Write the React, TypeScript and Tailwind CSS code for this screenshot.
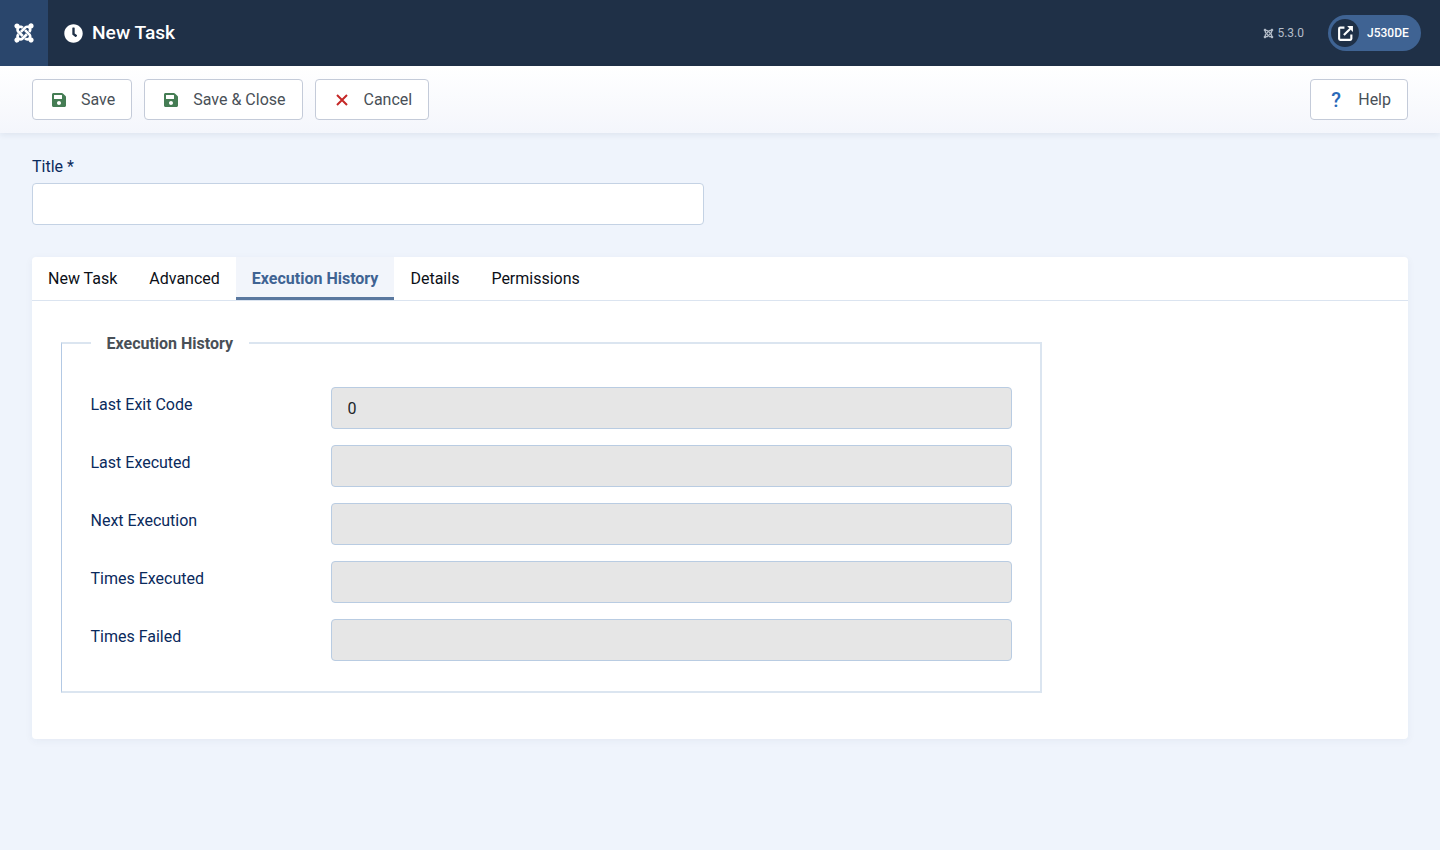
import { FaJoomla, FaClock, FaSave } from 'react-icons/fa';

const tabs = ['New Task', 'Advanced', 'Execution History', 'Details', 'Permissions'];

const rows = [
    { label: 'Last Exit Code', value: '0' },
    { label: 'Last Executed', value: '' },
    { label: 'Next Execution', value: '' },
    { label: 'Times Executed', value: '' },
    { label: 'Times Failed', value: '' },
];

const saveIcon = <FaSave className="h-4 w-3.5 text-[#457d54]" />;

function ToolbarButton({ icon, label, pad }: { icon: React.ReactNode; label: string; pad: string }) {
    return (
        <button className={`flex h-[41px] items-center gap-[15px] rounded-[4px] border border-[#c4cbd9] bg-white pr-4 text-base text-[#495057] ${pad}`}>
            {icon}
            {label}
        </button>
    );
}

export default function App() {
    return (
        <div className="min-h-[850px] bg-[#eff4fc] font-['Roboto',sans-serif] text-base">
            <header className="flex h-[66px] items-center bg-[#1f3047] text-white">
                <div className="flex h-full w-12 items-center justify-center bg-[#2a466c]">
                    <FaJoomla size={22} />
                </div>
                <FaClock size={19} className="ml-4" />
                <h1 className="ml-[9px] pt-px text-[19.2px] font-medium">New Task</h1>
                <div className="ml-auto flex items-center gap-[3px] text-xs text-[#b4bdc9]">
                    <FaJoomla size={11} />
                    5.3.0
                </div>
                <div className="ml-6 mr-[19px] flex h-9 w-[93px] items-center rounded-full bg-[#3f6393] pl-[3px]">
                    <div className="flex h-7 w-7 items-center justify-center rounded-full bg-[#1f3047]">
                        <svg width="17" height="17" viewBox="0 0 16 16" fill="none">
                            <path d="M7 2.5H3a1 1 0 0 0-1 1V13a1 1 0 0 0 1 1h9.5a1 1 0 0 0 1-1V9" stroke="currentColor" strokeWidth="2" />
                            <path d="M6.5 9.5l6-6" stroke="currentColor" strokeWidth="2" />
                            <path d="M9.5 1H15v5.5z" fill="currentColor" />
                        </svg>
                    </div>
                    <span className="ml-2 text-xs font-medium">J530DE</span>
                </div>
            </header>

            <div className="flex h-[67px] items-center justify-between bg-gradient-to-b from-white to-[#f4f6fc] px-8 shadow-[0_2px_6px_rgba(30,50,90,0.08)]">
                <div className="flex gap-3">
                    <ToolbarButton pad="pl-[19px]" icon={saveIcon} label="Save" />
                    <ToolbarButton pad="pl-[19px]" icon={saveIcon} label="Save & Close" />
                    <ToolbarButton
                        pad="pl-[19px]"
                        icon={
                            <svg width="14" height="14" viewBox="0 0 14 14" className="text-[#c52827]">
                                <path d="M2 2l10 10M12 2L2 12" stroke="currentColor" strokeWidth="2" fill="none" />
                            </svg>
                        }
                        label="Cancel"
                    />
                </div>
                <ToolbarButton
                    pad="pl-[18px]"
                    icon={<span className="w-3.5 text-center text-xl font-medium leading-none text-[#2a69b8]">?</span>}
                    label="Help"
                />
            </div>

            <main className="px-8 pt-[22px]">
                <label className="block h-[28px] leading-6 text-[#0a2a5c]">Title *</label>
                <input className="block h-[42px] w-[672px] rounded-[4px] border border-[#c4d2e4] bg-white" />

                <section className="mt-8 rounded-[4px] bg-white shadow-[0_2px_8px_rgba(30,50,90,0.05)]">
                    <div className="flex h-11 border-b border-[#dbe4f0]">
                        {tabs.map((tab) =>
                            tab === 'Execution History' ? (
                                <div key={tab} className="flex h-[43px] items-center border-b-[3px] border-[#5a789f] bg-[#f2f5fb] px-4 pt-[3px] font-bold text-[#3f6393]">
                                    {tab}
                                </div>
                            ) : (
                                <div key={tab} className="flex h-[43px] items-center px-4 text-[#0b0f17]">
                                    {tab}
                                </div>
                            )
                        )}
                    </div>
                    <div className="px-[29px] pb-[46px] pt-[30px]">
                        <fieldset className="w-[980px] border-2 border-l border-[#dbe5f0] border-l-[#b3c9e4] pb-[30px] pl-[28.5px] pr-[28px] pt-8">
                            <legend className="h-6 px-4 font-bold leading-[26px] text-[#495057]">Execution History</legend>
                            <div className="flex flex-col gap-4">
                                {rows.map((row) => (
                                    <div key={row.label} className="flex">
                                        <label className="w-[240px] pt-[6px] leading-6 text-[#0a2a5c]">{row.label}</label>
                                        <input
                                            readOnly
                                            value={row.value}
                                            className="h-[42px] w-[681px] rounded-[4px] border border-[#b9cce2] bg-[#e6e6e6] px-4 text-[#212529]"
                                        />
                                    </div>
                                ))}
                            </div>
                        </fieldset>
                    </div>
                </section>
            </main>
        </div>
    );
}
